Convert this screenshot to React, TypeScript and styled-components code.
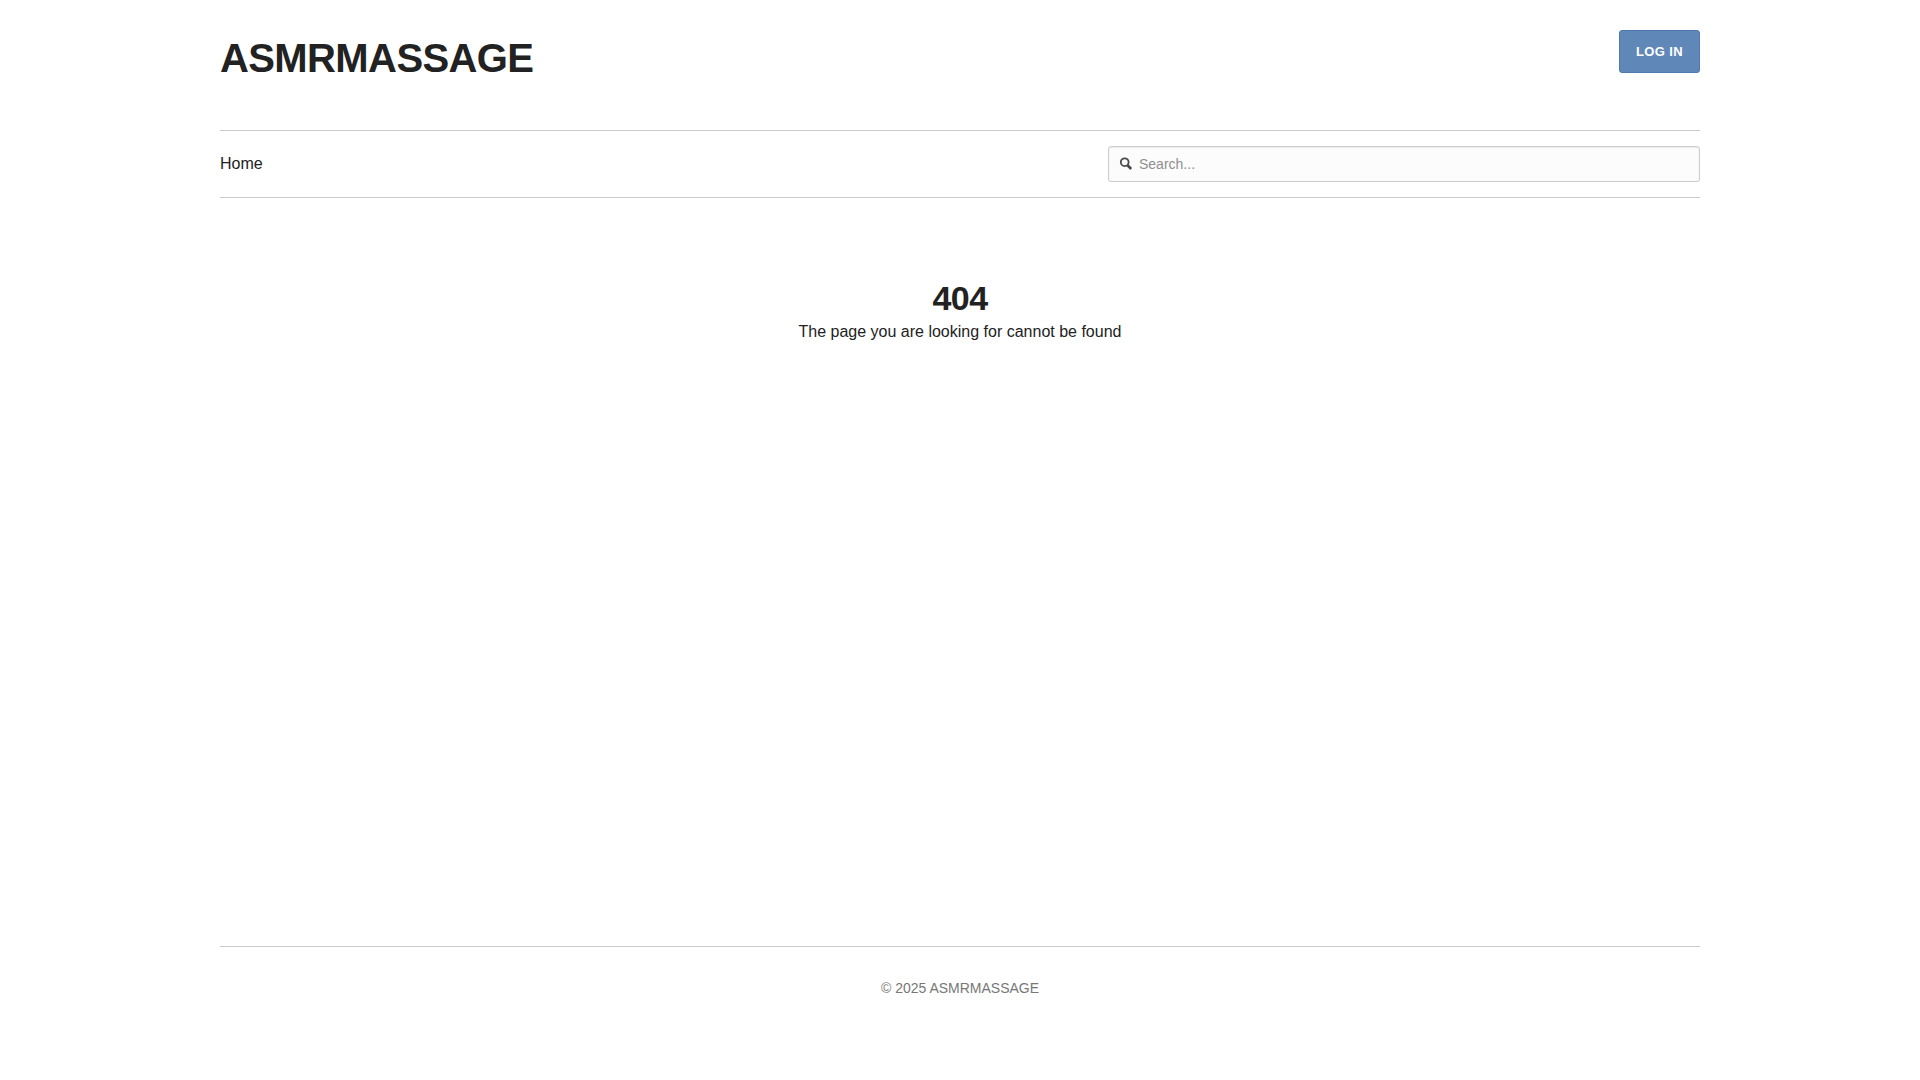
import React from 'react';
import styled, { createGlobalStyle } from 'styled-components';

const GlobalStyle = createGlobalStyle`
  *, *::before, *::after { box-sizing: border-box; }
  body {
    margin: 0;
    background: #fff;
    color: #222;
    font: 16px/24px "Liberation Sans", Arial, sans-serif;
  }
`;

const Page = styled.div`
  display: flex;
  flex-direction: column;
  min-height: 100vh;
  max-width: 1480px;
  margin: 0 auto;
`;

const Header = styled.header`
  display: flex;
  justify-content: space-between;
  align-items: flex-start;
  padding: 30px 0 44px;
`;

const SiteTitle = styled.h1`
  margin: 0;
  font-size: 40px;
  line-height: 56px;
  letter-spacing: -0.015em;
`;

const LoginButton = styled.button`
  height: 43px;
  padding: 0 16px;
  border: 1px solid #4d7ab3;
  border-radius: 3px;
  background: #5f87b8;
  color: #fff;
  font: bold 13px/16px "Liberation Sans", Arial, sans-serif;
  letter-spacing: 0.03em;
  text-transform: uppercase;
`;

const NavBar = styled.nav`
  display: flex;
  justify-content: space-between;
  align-items: center;
  padding: 15px 0;
  border-top: 1px solid #ccc;
  border-bottom: 1px solid #ccc;
`;

const NavLink = styled.a`
  color: inherit;
  text-decoration: none;
`;

const SearchBox = styled.label`
  display: flex;
  align-items: center;
  gap: 6px;
  width: 40%;
  height: 36px;
  padding: 0 10px;
  border: 1px solid #ccc;
  border-radius: 3px;
  background: #fcfcfc;
  box-shadow: inset 0 1px 2px rgba(0, 0, 0, 0.08);
`;

const SearchInput = styled.input`
  flex: 1;
  min-width: 0;
  padding: 0;
  border: 0;
  outline: 0;
  background: transparent;
  font: 14px/20px "Liberation Sans", Arial, sans-serif;
  &::placeholder { color: #8f8f8f; }
`;

const Main = styled.main`
  flex: 1;
  padding-top: 80px;
  text-align: center;
`;

const ErrorCode = styled.h2`
  margin: 0 0 2px;
  font-size: 34px;
  line-height: 40px;
  letter-spacing: -0.015em;
`;

const Message = styled.p`
  margin: 0;
`;

const Footer = styled.footer`
  padding: 29px 0 80px;
  border-top: 1px solid #ccc;
  color: #777;
  font-size: 14px;
  text-align: center;
`;

export default function App() {
  return (
    <>
      <GlobalStyle />
      <Page>
        <Header>
          <SiteTitle>ASMRMASSAGE</SiteTitle>
          <LoginButton type="button">Log in</LoginButton>
        </Header>
        <NavBar>
          <NavLink href="#">Home</NavLink>
          <SearchBox>
            <svg width="14" height="14" viewBox="0 0 14 14" fill="none" stroke="#4a4a4a" aria-hidden="true">
              <circle cx="5.7" cy="5.2" r="3.9" strokeWidth="1.8" />
              <path d="M8.3 8 12.2 12" strokeWidth="2.6" />
            </svg>
            <SearchInput type="search" placeholder="Search..." aria-label="Search" />
          </SearchBox>
        </NavBar>
        <Main>
          <ErrorCode>404</ErrorCode>
          <Message>The page you are looking for cannot be found</Message>
        </Main>
        <Footer>© 2025 ASMRMASSAGE</Footer>
      </Page>
    </>
  );
}
